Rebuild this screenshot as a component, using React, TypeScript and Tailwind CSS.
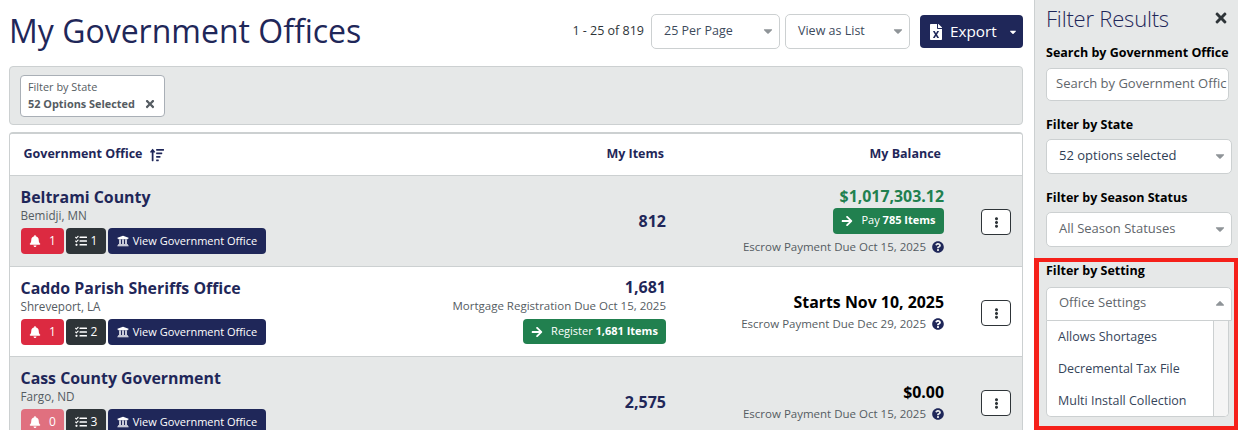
import React from "react";
import { FaBell, FaTasks, FaUniversity, FaArrowRight, FaQuestionCircle, FaEllipsisV, FaFileExcel, FaTimes, FaCaretDown, FaCaretUp, FaSortAmountUp } from "react-icons/fa";

function Caret({ up = false }: { up?: boolean }) {
  return up ? (
    <FaCaretUp className="text-[#8f9498] text-[14px]" />
  ) : (
    <FaCaretDown className="text-[#8f9498] text-[14px]" />
  );
}

function Select({ w, label }: { w: string; label: string }) {
  return (
    <div className={`${w} h-[35px] bg-white border border-[#ccd0d1] rounded-[5px] flex items-center justify-between pl-[12px] pr-[4px] pb-[1px] text-[12.5px] text-[#3d4a5c]`}>
      <span>{label}</span>
      <Caret />
    </div>
  );
}

function SideSelect({ label, muted }: { label: string; muted?: boolean }) {
  return (
    <div className={`h-[35px] bg-white border border-[#ccd0d1] rounded-[5px] flex items-center justify-between pl-[12px] pr-[4px] text-[13px] ${muted ? "pb-[1px] text-[#5f666b]" : "pb-[2px] text-[#2f3e55]"}`}>
      <span>{label}</span>
      <Caret />
    </div>
  );
}

function Row({
  name, place, bell, tasks, alt, faded, first, items, children,
}: {
  name: string; place: string; bell: number; tasks: number; alt?: boolean; faded?: boolean; first?: boolean;
  items: React.ReactNode; children: React.ReactNode;
}) {
  return (
    <div className={`${first ? "h-[91px]" : "h-[90px]"} shrink-0 border-b border-[#ccd0d1] flex items-stretch ${alt ? "bg-[#e6e8e8]" : "bg-white"}`}>
      <div className="w-[350px] pl-[10.5px] pt-[10px]">
        <div className="text-[15.9px] leading-[23px] font-bold text-[#1f2759]">{name}</div>
        <div className="text-[11.7px] leading-[12px] text-[#555c62]">{place}</div>
        <div className="flex gap-[2px] mt-[7px] ml-[0.5px]">
          <div className={`w-[43px] h-[26px] rounded-[4px] flex items-center justify-center gap-[8px] text-white text-[12px] ${faded ? "bg-[#e0707f]" : "bg-[#dc2a41]"}`}>
            <FaBell className="text-[12px]" />
            <span>{bell}</span>
          </div>
          <div className="w-[40px] h-[26px] rounded-[4px] bg-[#2e3438] flex items-center justify-center gap-[4px] text-white text-[12px]">
            <FaTasks className="text-[12px]" />
            <span>{tasks}</span>
          </div>
          <div className="w-[158px] h-[26px] rounded-[4px] bg-[#1f2759] flex items-center justify-center gap-[4px] text-white text-[11px]">
            <FaUniversity className="text-[12px]" />
            <span>View Government Office</span>
          </div>
        </div>
      </div>
      <div className="w-[306px] flex flex-col items-end justify-center">{items}</div>
      <div className="w-[278px] flex flex-col items-end justify-center">{children}</div>
      <div className="flex-1 flex justify-end items-start pr-[11px] pt-[33px]">
        <div className="w-[30px] h-[26px] bg-white border border-[#2e3438] rounded-[4px] flex items-center justify-center text-[#2e3438]">
          <FaEllipsisV className="text-[11px]" />
        </div>
      </div>
    </div>
  );
}

function Due({ text }: { text: string }) {
  return (
    <div className="flex items-center gap-[6px] text-[11.5px] leading-[16px] text-[#555c62]">
      <span>{text}</span>
      <FaQuestionCircle className="text-[#1f2759] text-[12px]" />
    </div>
  );
}

export default function App() {
  return (
    <div className="w-[1238px] h-[430px] flex overflow-hidden bg-white" style={{ fontFamily: '"Open Sans", sans-serif' }}>
      <main className="w-[1034px] shrink-0 pl-[9px] pr-[11px] flex flex-col">
        <header className="h-[66px] shrink-0 flex items-start justify-between">
          <h1 className="mt-[15px] text-[32px] font-medium text-[#1f2759] leading-none">My Government Offices</h1>
          <div className="mt-[14px] flex items-center">
            <span className="text-[12.5px] text-[#2e3438] mr-[7px] pb-[1px]">1 - 25 of 819</span>
            <Select w="w-[129px]" label="25 Per Page" />
            <div className="w-[5px]" />
            <Select w="w-[125px]" label="View as List" />
            <div className="w-[10px]" />
            <div className="w-[103px] h-[33px] rounded-[4px] bg-[#1f2759] text-white flex items-center pl-[8px] pr-[5px]">
              <FaFileExcel className="text-[16px] mr-[6px]" />
              <span className="text-[15.3px] flex-1 pb-[1px]">Export</span>
              <FaCaretDown className="text-[10px]" />
            </div>
          </div>
        </header>
        <div className="h-[59px] shrink-0 bg-[#e6e8e8] border border-[#ccd0d1] rounded-[4px] pl-[10px] pt-[8px]">
          <div className="w-[145px] h-[42px] bg-white border border-[#a9afb6] rounded-[4px] pl-[7px] pt-[2px]">
            <div className="text-[10.9px] leading-[17px] text-[#555c62]">Filter by State</div>
            <div className="flex items-center text-[10.9px] leading-[17px] font-bold text-[#555c62]">
              <span>52 Options Selected</span>
              <FaTimes className="text-[12px] ml-[9px]" />
            </div>
          </div>
        </div>
        <section className="mt-[7px] flex-1 min-h-0 border-x border-t-2 border-[#ccd0d1] rounded-t-[4px] overflow-hidden flex flex-col">
          <div className="h-[42px] shrink-0 border-b border-[#ccd0d1] flex items-center bg-white text-[12.5px] font-bold text-[#1f2759]">
            <div className="w-[350px] pl-[13.5px] flex items-center gap-[8px]">
              <span>Government Office</span>
              <FaSortAmountUp className="text-[14px]" />
            </div>
            <div className="w-[304px] text-right">My Items</div>
            <div className="w-[277px] text-right">My Balance</div>
          </div>
          <Row first name="Beltrami County" place="Bemidji, MN" bell={1} tasks={1} alt
            items={<div className="text-[16px] font-bold text-[#1f2759]">812</div>}>
            <div className="-mt-[3px] text-[15.9px] leading-[22px] font-bold text-[#21804f]">$1,017,303.12</div>
            <div className="h-[26px] w-[111px] rounded-[4px] bg-[#21804f] text-white text-[11px] flex items-center justify-center gap-[8px] mt-[1px] mb-[5px]">
              <FaArrowRight className="text-[12px]" />
              <span>Pay <b>785 Items</b></span>
            </div>
            <Due text="Escrow Payment Due Oct 15, 2025" />
          </Row>
          <Row name="Caddo Parish Sheriffs Office" place="Shreveport, LA" bell={1} tasks={2}
            items={
              <>
                <div className="-mt-[3px] text-[16px] leading-[22px] font-bold text-[#1f2759]">1,681</div>
                <div className="text-[11.5px] leading-[16px] text-[#555c62]">Mortgage Registration Due Oct 15, 2025</div>
                <div className="h-[25px] w-[143px] rounded-[4px] bg-[#21804f] text-white text-[11px] flex items-center justify-center gap-[8px] mt-[5px]">
                  <FaArrowRight className="text-[12px]" />
                  <span>Register <b>1,681 Items</b></span>
                </div>
              </>
            }>
            <div className="text-[15.9px] leading-[22px] font-bold text-black">Starts Nov 10, 2025</div>
            <div className="mt-[3px]"><Due text="Escrow Payment Due Dec 29, 2025" /></div>
          </Row>
          <Row name="Cass County Government" place="Fargo, ND" bell={0} tasks={3} alt faded
            items={<div className="text-[16px] font-bold text-[#1f2759]">2,575</div>}>
            <div className="text-[15.9px] leading-[22px] font-bold text-black">$0.00</div>
            <div className="mt-[3px]"><Due text="Escrow Payment Due Oct 15, 2025" /></div>
          </Row>
        </section>
      </main>
      <aside className="flex-1 min-w-0 bg-[#e6e8e8] border-l border-[#ccd0d1] flex flex-col">
        <div className="pl-[11px] pr-[6px]">
          <div className="h-[36px] flex items-center justify-between">
            <span className="text-[22px] font-light text-[#1f2759] tracking-[-0.2px]">Filter Results</span>
            <FaTimes className="text-[16px] text-[#2e3438] mr-[3px]" />
          </div>
          <div className="text-[12.5px] leading-[17px] font-bold text-black mt-[8px] whitespace-nowrap">Search by Government Office</div>
          <div className="h-[33px] w-[183px] mt-[7px] bg-white border border-[#ccd0d1] rounded-[5px] flex items-center pl-[9px] pr-[5px] pb-[2px] text-[13px] text-[#5f666b] overflow-hidden whitespace-nowrap">
            Search by Government Offic
          </div>
          <div className="text-[12.5px] leading-[17px] font-bold text-black mt-[15px] mb-[6px]">Filter by State</div>
          <SideSelect label="52 options selected" />
          <div className="text-[12.5px] leading-[17px] font-bold text-black mt-[15px] mb-[6px]">Filter by Season Status</div>
          <SideSelect label="All Season Statuses" muted />
        </div>
        <div className="mt-[11px] -ml-[1px] flex-1 min-h-0 border-l-[5px] border-r-[4px] border-y-[4px] border-[#f5201a] pl-[7px] pr-[2px]">
          <div className="text-[12.5px] leading-[17px] font-bold text-black mb-[8px]">Filter by Setting</div>
          <div className="h-[34px] bg-white border border-[#ccd0d1] rounded-t-[5px] flex items-center justify-between pl-[12px] pr-[4px] pb-[2px] text-[13px] text-[#5f666b]">
            <span>Office Settings</span>
            <Caret up />
          </div>
          <div className="h-[96px] w-[183px] bg-white border-x border-b border-[#ccd0d1] rounded-b-[5px] flex overflow-hidden">
            <div className="flex-1 pl-[11px] text-[12.5px] leading-[32px] text-[#36455a]">
              <div>Allows Shortages</div>
              <div>Decremental Tax File</div>
              <div className="whitespace-nowrap">Multi Install Collection</div>
            </div>
            <div className="w-[15px] bg-[#f5f5f5] border-l border-[#ccd0d1]" />
          </div>
        </div>
      </aside>
    </div>
  );
}
